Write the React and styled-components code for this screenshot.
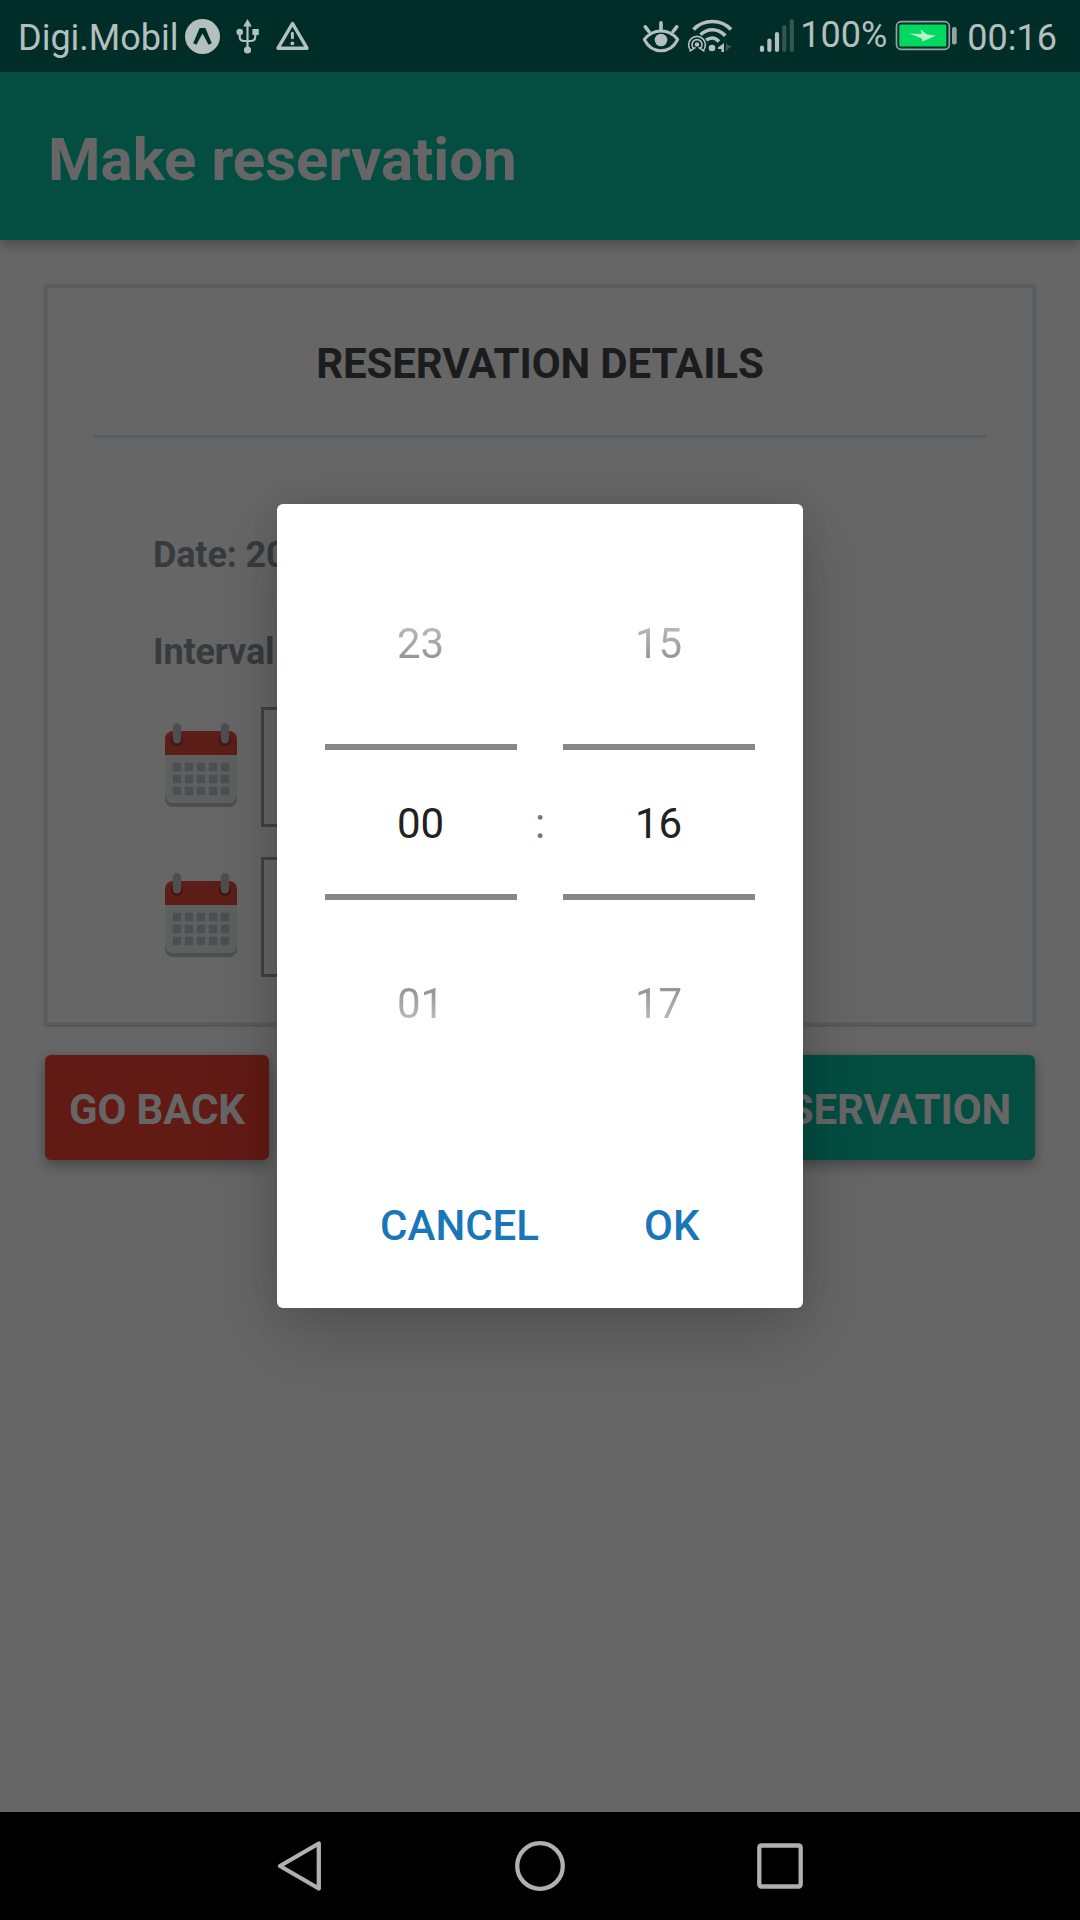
import React from "react";
import styled, { createGlobalStyle } from "styled-components";

const GlobalStyle = createGlobalStyle`
  * { box-sizing: border-box; }
  html, body { margin: 0; padding: 0; background: #000; }
  body { font-family: Roboto, "Liberation Sans", sans-serif; }
  button { font: inherit; border: 0; margin: 0; cursor: pointer; }
`;

const Screen = styled.div`
  position: relative;
  width: 1080px;
  height: 1920px;
  display: flex;
  flex-direction: column;
  overflow: hidden;
  background: #fff;
`;

/* ---------- status bar ---------- */

const StatusBar = styled.div`
  position: relative;
  z-index: 3;
  flex: none;
  height: 72px;
  padding: 0 23px 0 18px;
  display: flex;
  justify-content: space-between;
  background: #012d28;
  color: #b3c0be;
`;

const StatusGroup = styled.div`
  display: flex;
  align-items: flex-start;
`;

const StatusText = styled.span`
  font-size: 36px;
  line-height: 44px;
  padding-top: ${(p) => p.$top}px;
  white-space: nowrap;
`;

const StatusIcons = styled.svg`
  display: block;
  height: 72px;
  flex: none;
  margin: 0 ${(p) => p.$after || 0}px 0 ${(p) => p.$before || 0}px;
`;

/* ---------- page ---------- */

const AppBar = styled.header`
  position: relative;
  flex: none;
  height: 168px;
  padding: 7px 48px 0;
  display: flex;
  align-items: center;
  background: #08c1a3;
  box-shadow: 0 4px 12px rgba(0, 0, 0, 0.3);
`;

const Title = styled.h1`
  margin: 0;
  font-size: 60px;
  font-weight: 700;
  line-height: 72px;
  color: #fff;
`;

const Content = styled.main`
  flex: 1;
  padding: 45px 45px 0;
  display: flex;
  flex-direction: column;
  gap: 30px;
`;

const Card = styled.section`
  height: 740px;
  border: 3px solid #e1e8ee;
  padding: 0 45px;
  display: flex;
  flex-direction: column;
  background: #fff;
  box-shadow: 0 1px 3px rgba(0, 0, 0, 0.2), 0 0 2px rgba(0, 0, 0, 0.2);
`;

const CardTitle = styled.h2`
  margin: 0;
  height: 150px;
  padding-top: 51px;
  font-size: 42px;
  font-weight: 700;
  letter-spacing: -0.12px;
  line-height: 50px;
  text-align: center;
  color: #43484d;
  border-bottom: 3px solid #e1e8ee;
`;

const Form = styled.div`
  padding: 92px 60px 0;
  display: flex;
  flex-direction: column;
`;

const Label = styled.div`
  height: 97px;
  font-size: 36px;
  font-weight: 700;
  letter-spacing: -0.15px;
  line-height: 50px;
  color: #86939e;
`;

const FieldRow = styled.div`
  display: flex;
  align-items: flex-start;
  padding: 0 0 0 12px;
  height: 150px;
  margin-top: ${(p) => (p.$first ? "-17px" : "0")};
`;

const CalendarSvg = styled.svg`
  display: block;
  width: 72px;
  height: 84px;
  margin: 16px 24px 0 0;
`;

const Field = styled.div`
  width: 480px;
  height: 120px;
  border: 3px solid #a4a4a4;
`;

const ButtonRow = styled.div`
  display: flex;
  justify-content: space-between;
`;

const RaisedButton = styled.button`
  height: 105px;
  padding: 3px 24px 0;
  border-radius: 6px;
  background: ${(p) => p.$color};
  color: #fff;
  font-size: 42px;
  font-weight: 700;
  letter-spacing: -0.14px;
  white-space: nowrap;
  box-shadow: 0 7px 14px rgba(0, 0, 0, 0.25), 0 0 10px rgba(0, 0, 0, 0.1);
`;

/* ---------- dialog ---------- */

const Scrim = styled.div`
  position: absolute;
  z-index: 2;
  inset: 0 0 108px 0;
  display: flex;
  align-items: center;
  justify-content: center;
  background: rgba(0, 0, 0, 0.6);
`;

const Dialog = styled.div`
  width: 526px;
  height: 804px;
  border-radius: 6px;
  background: #fff;
  display: flex;
  flex-direction: column;
  box-shadow: 0 26px 70px rgba(0, 0, 0, 0.2), 0 0 30px rgba(0, 0, 0, 0.08);
`;

const Picker = styled.div`
  height: 640px;
  padding: 60px 48px 0;
  display: grid;
  grid-template-columns: 192px 46px 192px;
  align-items: start;
`;

const Wheel = styled.div`
  display: flex;
  flex-direction: column;
`;

const Faded = styled.div`
  height: 180px;
  padding-right: 1px;
  line-height: ${(p) => (p.$down ? 208 : 160)}px;
  font-size: 42px;
  text-align: center;
  color: transparent;
  background: ${(p) =>
    p.$down
      ? "linear-gradient(180deg, #7e7e7e 10px, #949494 88px, #bababa 120px, #fff 180px)"
      : "linear-gradient(0deg, #7e7e7e 10px, #949494 84px, #bababa 118px, #fff 180px)"};
  background-clip: text;
  -webkit-background-clip: text;
`;

const Selected = styled.div`
  height: 156px;
  padding-right: 1px;
  border: solid #878787;
  border-width: 6px 0;
  line-height: 147px;
  font-size: 42px;
  text-align: center;
  color: #212121;
`;

const Colon = styled.div`
  padding-top: 180px;
  line-height: 159px;
  font-size: 42px;
  text-align: center;
  color: #757575;
`;

const Actions = styled.div`
  display: flex;
  justify-content: flex-end;
  padding: 0 103.5px 0 0;
  gap: 105px;
`;

const TextButton = styled.button`
  padding: 0;
  background: none;
  font-size: 42px;
  font-weight: 500;
  line-height: 164px;
  height: 164px;
  color: #1976b8;
`;

const NavBar = styled.nav`
  flex: none;
  height: 108px;
  padding: 0 272px;
  display: flex;
  align-items: center;
  justify-content: space-between;
  background: #000;
`;

const NavIcon = styled.svg`
  display: block;
  width: 56px;
  height: 56px;
  fill: none;
  stroke: #b0b0b0;
  stroke-width: 4.3;
  stroke-linejoin: round;
`;

const CalendarIcon = () => (
  <CalendarSvg viewBox="0 0 72 84">
    <path d="M0 32V76a8 8 0 0 0 8 8H64a8 8 0 0 0 8-8V32z" fill="#bdc3c7" />
    <path d="M0 32V72a8 8 0 0 0 8 8H64a8 8 0 0 0 8-8V32z" fill="#ecf0f1" />
    <path d="M0 32V16a8 8 0 0 1 8-8H64a8 8 0 0 1 8 8V32z" fill="#e64c3c" />
    {[12, 60].map((x) => (
      <g key={x}>
        <circle cx={x} cy="17" r="6" fill="#a83226" />
        <rect x={x - 4.2} y="0" width="8.4" height="20.5" rx="4.2" fill="#bdc3c7" />
      </g>
    ))}
    {[44, 56, 68].map((y) =>
      [12, 24, 36, 48, 60].map((x) => (
        <rect key={`${x}-${y}`} x={x - 4.2} y={y - 4.2} width="8.4" height="8.4" fill="#c1c4c8" />
      ))
    )}
  </CalendarSvg>
);

const NotificationIcons = () => (
  <StatusIcons $before={1} width="136" viewBox="180 0 136 72" fill="none" stroke="#b3c0be">
    <circle cx="202.5" cy="36.5" r="17.5" fill="#b3c0be" stroke="none" />
    <path d="M199.6 28h5.8l6.4 15.2-3.2 1.6-6.1-11.4-6.1 11.4-3.2-1.6z" fill="#012d28" stroke="none" />
    <g strokeWidth="2.2">
      <path d="M247.5 25V49M239.7 32v4.5q0 4.5 4.5 4.5h6.6q4.5 0 4.5-4.5V32" />
      <g fill="#b3c0be" stroke="none">
        <path d="M247.5 19l4.3 7.5h-8.6z" />
        <circle cx="239.7" cy="32" r="3.3" />
        <rect x="252.4" y="29" width="6.4" height="6" rx="0.5" />
        <circle cx="247.5" cy="50" r="3.6" />
      </g>
    </g>
    <path d="M292.5 23.5L307 48.2H278z" strokeWidth="3.4" strokeLinejoin="round" />
    <path d="M292.4 33.2v4.6" strokeWidth="3" strokeLinecap="round" />
    <circle cx="292.4" cy="43.4" r="1.9" fill="#b3c0be" stroke="none" />
  </StatusIcons>
);

const ConnectionIcons = () => (
  <StatusIcons width="160" viewBox="640 0 160 72" fill="none" stroke="#b3c0be" strokeLinecap="round">
    <path d="M644.3 39.5Q651 31 661 31T677.7 39.5Q672 50.7 661 50.7T644.3 39.5z" strokeWidth="3" strokeLinejoin="round" />
    <circle cx="661" cy="40" r="6.3" fill="#b3c0be" stroke="none" />
    <path d="M661 22.7v7M645.3 26.8l3.6 4.7M676.7 26.8l-3.6 4.7" strokeWidth="3.6" />
    <g strokeWidth="3.6" strokeLinecap="butt">
      <path d="M693.5 29.5Q701 21.5 712.3 21.5T731 29.5" />
      <path d="M700.5 34.8Q705.5 29.7 712.3 29.7T725.3 35.6" />
      <path d="M706.2 40.2Q709 38 712.3 38T719 41.5" />
    </g>
    <circle cx="712" cy="48" r="3.3" fill="#b3c0be" stroke="none" />
    <g strokeWidth="1.6" strokeLinecap="butt">
      <path d="M691 50.7a8.4 8.4 0 1 1 12 0" />
      <path d="M693.6 48.3a5 5 0 1 1 6.8 0" />
      <path d="M689.5 51.3l6-4M704.5 51.3l-6-4" />
    </g>
    <circle cx="697" cy="44.5" r="2.3" fill="#b3c0be" stroke="none" />
    <path d="M724 43v9h-2.6v-3H718v-1.5z" fill="#b3c0be" stroke="none" />
    <path d="M726 43v9l2-3 4-3-3.5-.5z" fill="#3a5954" stroke="none" />
    <g strokeWidth="4.2">
      <path d="M762 47.5V50M769.4 40.5V50M777 34V50" />
      <path d="M784.3 27V50M791.8 21V50" stroke="#36554f" />
    </g>
  </StatusIcons>
);

const BatteryIcon = () => (
  <StatusIcons $before={7} $after={9} width="64" viewBox="894 0 64 72">
    <rect x="896.5" y="21.7" width="52.8" height="27.6" rx="4.5" fill="none" stroke="#93a5a2" strokeWidth="1.7" />
    <rect x="899.3" y="24.6" width="47" height="21.8" rx="1" fill="#02d95f" />
    <rect x="952" y="27" width="4.7" height="17.4" rx="2" fill="#93a5a2" />
    <path d="M909.3 33.5L921.5 34 920.6 29.3 926.5 34.3 936 35.8 922.3 41.6 921.8 38.6z" fill="#b5f3c9" />
  </StatusIcons>
);

const TimeWheel = ({ before, value, after }) => (
  <Wheel>
    <Faded>{before}</Faded>
    <Selected>{value}</Selected>
    <Faded $down>{after}</Faded>
  </Wheel>
);

export default function App() {
  return (
    <>
      <GlobalStyle />
      <Screen>
        <StatusBar>
          <StatusGroup>
            <StatusText $top={16}>Digi.Mobil</StatusText>
            <NotificationIcons />
          </StatusGroup>
          <StatusGroup>
            <ConnectionIcons />
            <StatusText $top={13}>100%</StatusText>
            <BatteryIcon />
            <StatusText $top={16}>00:16</StatusText>
          </StatusGroup>
        </StatusBar>

        <AppBar>
          <Title>Make reservation</Title>
        </AppBar>

        <Content>
          <Card>
            <CardTitle>RESERVATION DETAILS</CardTitle>
            <Form>
              <Label>Date: 20</Label>
              <Label>Interval</Label>
              <FieldRow $first>
                <CalendarIcon />
                <Field />
              </FieldRow>
              <FieldRow>
                <CalendarIcon />
                <Field />
              </FieldRow>
            </Form>
          </Card>
          <ButtonRow>
            <RaisedButton $color="#f44336">GO BACK</RaisedButton>
            <RaisedButton $color="#08c1a3">MAKE RESERVATION</RaisedButton>
          </ButtonRow>
        </Content>

        <NavBar>
          <NavIcon viewBox="272 1838 56 56">
            <path d="M280 1866L318.8 1843.5V1888.5z" />
          </NavIcon>
          <NavIcon viewBox="512 1838 56 56">
            <circle cx="540" cy="1866" r="22.8" />
          </NavIcon>
          <NavIcon viewBox="752 1838 56 56">
            <rect x="759.3" y="1845.5" width="41.4" height="41" rx="2" />
          </NavIcon>
        </NavBar>

        <Scrim>
          <Dialog>
            <Picker>
              <TimeWheel before="23" value="00" after="01" />
              <Colon>:</Colon>
              <TimeWheel before="15" value="16" after="17" />
            </Picker>
            <Actions>
              <TextButton>CANCEL</TextButton>
              <TextButton>OK</TextButton>
            </Actions>
          </Dialog>
        </Scrim>
      </Screen>
    </>
  );
}
